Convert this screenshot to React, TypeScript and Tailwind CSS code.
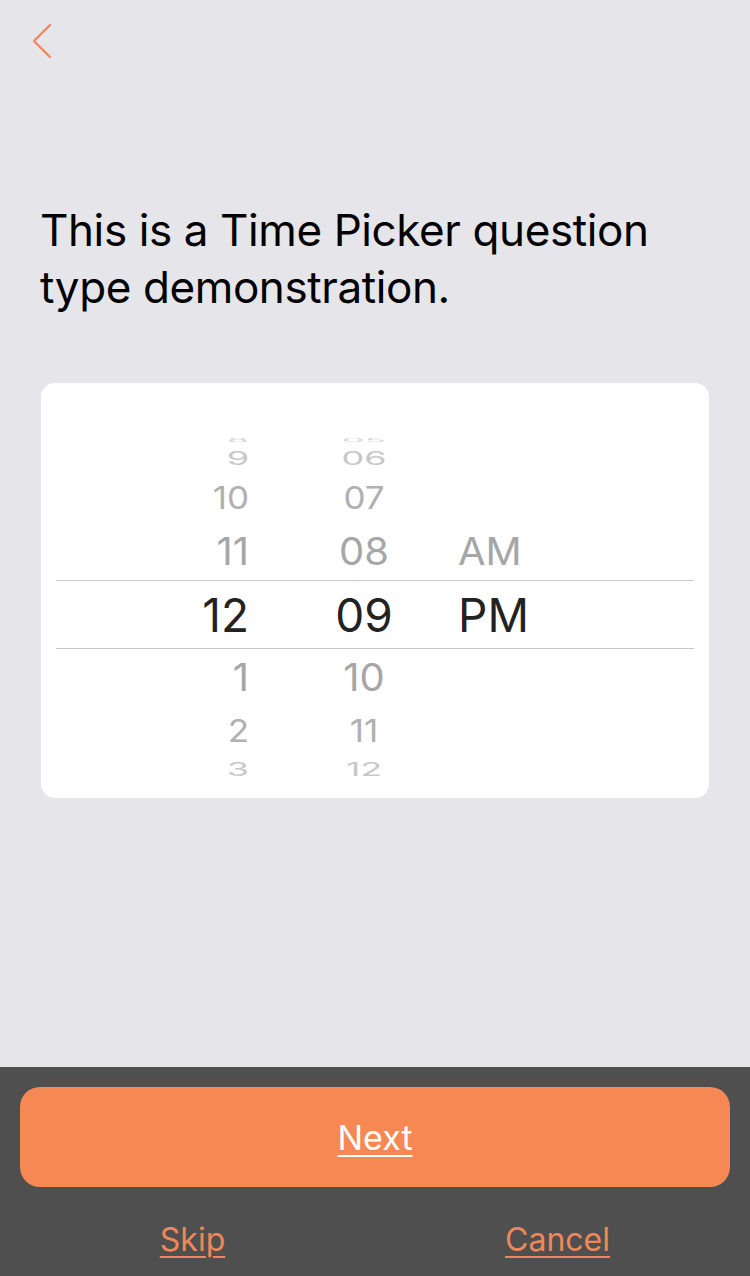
const rowsAbove = [
  { h: 'h-[12px]', size: 'text-[36px]', scale: 'scale-y-[0.12]', color: 'text-[#d6d6d6]', hour: '8', min: '05', ap: '' },
  { h: 'h-[24px]', size: 'text-[36px]', scale: 'scale-y-[0.5]', color: 'text-[#c8c8c8]', hour: '9', min: '06', ap: '' },
  { h: 'h-[54px]', size: 'text-[35px]', scale: 'scale-y-[0.88]', color: 'text-[#b0b0b0]', hour: '10', min: '07', ap: '' },
  { h: 'h-[56px]', size: 'text-[40px]', scale: 'scale-y-[0.95]', color: 'text-[#a6a6a6]', hour: '11', min: '08', ap: 'AM' },
];

const rowsBelow = [
  { h: 'h-[58px]', size: 'text-[40px]', scale: 'scale-y-[0.95]', color: 'text-[#a6a6a6]', hour: '1', min: '10', ap: '' },
  { h: 'h-[48px]', size: 'text-[35px]', scale: 'scale-y-[0.88]', color: 'text-[#b0b0b0]', hour: '2', min: '11', ap: '' },
  { h: 'h-[28px]', size: 'text-[36px]', scale: 'scale-y-[0.5]', color: 'text-[#c8c8c8]', hour: '3', min: '12', ap: '' },
];

type Row = (typeof rowsAbove)[number];

function WheelRow({ row }: { row: Row }) {
  return (
    <div className={`flex items-center overflow-hidden leading-none ${row.h} ${row.size} ${row.color}`}>
      <div className="w-[208px] text-right">
        <span className={`inline-block ${row.scale}`}>{row.hour}</span>
      </div>
      <div className="ml-[60px] w-[110px] text-center">
        <span className={`inline-block ${row.scale}`}>{row.min}</span>
      </div>
      <div className="ml-[39px]">
        <span className={`inline-block ${row.scale}`}>{row.ap}</span>
      </div>
    </div>
  );
}

export default function App() {
  return (
    <div
      className="min-h-[1276px] w-[750px] bg-[#e5e5ea] flex flex-col"
      style={{ fontFamily: 'Inter, "Noto Sans", sans-serif' }}
    >
      <div className="pt-[23px] pl-[32px]">
        <svg width="22" height="36" viewBox="0 0 22 36" fill="none" className="block">
          <path d="M18 2 L2 18 L18 34" stroke="#f0875a" strokeWidth="2.2" strokeLinecap="round" strokeLinejoin="round" />
        </svg>
      </div>

      <h1 className="mt-[143px] pl-[40px] pr-[60px] text-[44px] leading-[57px] text-black font-normal tracking-[-0.4px]">
        This is a Time Picker question type demonstration.
      </h1>

      <div className="mx-[41px] mt-[67px] bg-white rounded-[14px] pt-[51px] pb-[15px]">
        {rowsAbove.map((r, i) => (
          <WheelRow key={'a' + i} row={r} />
        ))}
        <div className="mx-[15px] h-[69px] border-y border-[#c8c8c8] flex items-center text-[46px] leading-none text-[#222222]">
          <div className="w-[193px] text-right">12</div>
          <div className="ml-[60px] w-[110px] text-center">09</div>
          <div className="ml-[39px]">PM</div>
        </div>
        {rowsBelow.map((r, i) => (
          <WheelRow key={'b' + i} row={r} />
        ))}
      </div>

      <div className="mt-auto h-[209px] bg-[#4f4f4f] pt-[20px] px-[20px]">
        <button className="w-full h-[100px] rounded-[20px] bg-[#f68953] text-white text-[34px] underline underline-offset-[5px] decoration-2">
          Next
        </button>
        <div className="grid grid-cols-2 mt-[29px] -mx-[10px]">
          <div className="text-center">
            <span className="text-[32px] text-[#f0875a] underline underline-offset-[5px] decoration-2">Skip</span>
          </div>
          <div className="text-center">
            <span className="text-[32px] text-[#f0875a] underline underline-offset-[5px] decoration-2">Cancel</span>
          </div>
        </div>
      </div>
    </div>
  );
}
